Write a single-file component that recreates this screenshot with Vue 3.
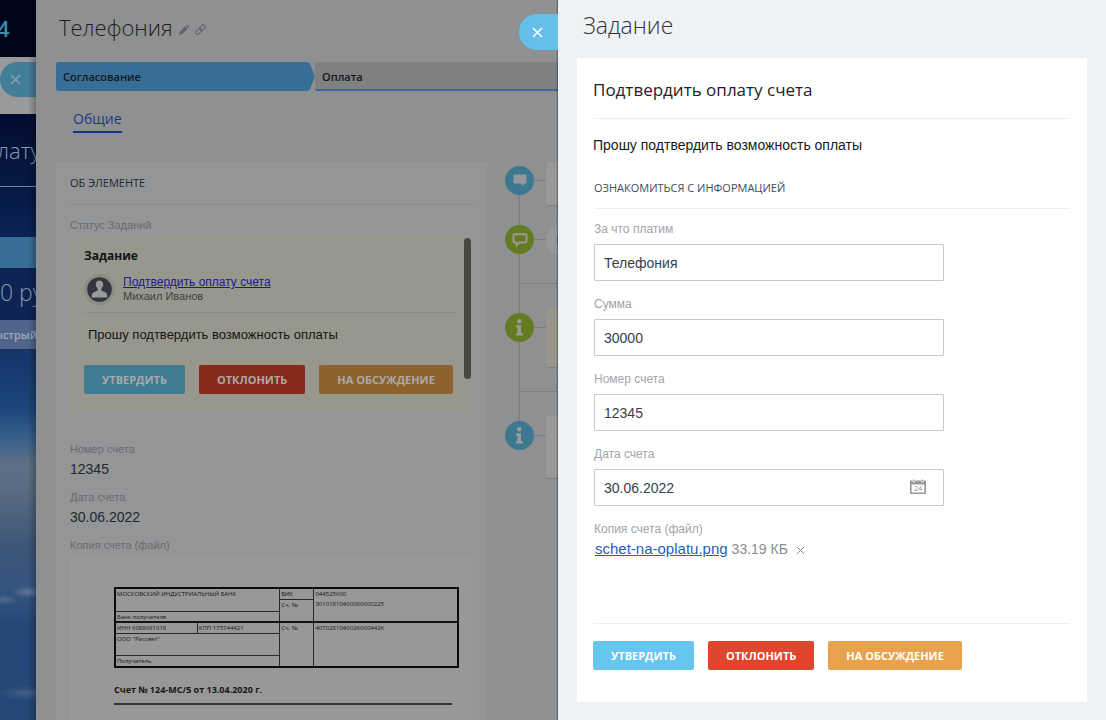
<script setup>
import { ref } from 'vue'

const fields = ref([
  { id: 'subject', label: 'За что платим', value: 'Телефония' },
  { id: 'amount', label: 'Сумма', value: '30000' },
  { id: 'number', label: 'Номер счета', value: '12345' },
  { id: 'date', label: 'Дата счета', value: '30.06.2022', calendar: true },
])

const actions = [
  { text: 'УТВЕРДИТЬ', kind: 'approve' },
  { text: 'ОТКЛОНИТЬ', kind: 'reject' },
  { text: 'НА ОБСУЖДЕНИЕ', kind: 'discuss' },
]
</script>

<template>
  <div class="page">
    <aside class="desk">
      <div class="desk-logo">4</div>
      <div class="desk-bar">
        <button class="desk-close" aria-label="Закрыть">
          <svg width="11" height="11" viewBox="0 0 11 11"><path d="M1 1l9 9M10 1l-9 9" /></svg>
        </button>
      </div>
      <div class="desk-title">лату</div>
      <div class="desk-gap"></div>
      <div class="desk-stage"></div>
      <div class="desk-sum">0 ру</div>
      <div class="desk-quick">ыстрый</div>
      <div class="desk-sky"></div>
    </aside>

    <main class="deal">
      <header class="deal-head">
        <h1>Телефония</h1>
        <svg class="head-icon" width="10" height="10" viewBox="0 0 11 11">
          <path d="M0 11l1-3.500L7 1.500l2.500 2.500-6 6z M7.800 0.900L8.700 0h0.800l1.500 1.500v0.800l-0.900 0.900z" fill="#606266" />
        </svg>
        <svg class="head-icon" width="11" height="11" viewBox="0 0 11 11" fill="none" stroke="#66686c" stroke-width="1.200">
          <rect x="4.200" y="1.700" width="6.400" height="3.800" rx="1.900" transform="rotate(-45 7.400 3.600)" />
          <rect x="0.400" y="5.500" width="6.400" height="3.800" rx="1.900" transform="rotate(-45 3.600 7.400)" />
        </svg>
      </header>

      <div class="stages">
        <div class="stage current">Согласование</div>
        <div class="stage next">Оплата</div>
      </div>

      <nav class="tabs"><a href="#general">Общие</a></nav>

      <div class="deal-body">
        <section class="info">
          <h2>ОБ ЭЛЕМЕНТЕ</h2>
          <div class="label">Статус Заданий</div>
          <div class="note">
            <div class="note-content">
              <h3>Задание</h3>
              <div class="person">
                <svg class="avatar" width="31" height="31" viewBox="0 0 31 31">
                  <circle cx="15.500" cy="15.500" r="15.500" fill="#8b8c85" />
                  <circle cx="15.500" cy="15.500" r="12.300" fill="#31363f" />
                  <path d="M15.500 6.500c-2.500 0-3.800 1.800-3.700 4.100.1 2 .9 3.200 1.900 4.100v1.500c-.7.900-2.900 1.400-4.500 2.200-1.200.6-1.600 2.800-1.600 5.200h15.800c0-2.400-.4-4.600-1.600-5.200-1.600-.8-3.800-1.300-4.500-2.200v-1.500c1-.9 1.800-2.100 1.900-4.100.1-2.300-1.200-4.100-3.700-4.100z" fill="#999a96" />
                </svg>
                <div>
                  <a href="#task">Подтвердить оплату счета</a>
                  <div class="name">Михаил Иванов</div>
                </div>
              </div>
              <p>Прошу подтвердить возможность оплаты</p>
              <div class="buttons">
                <button v-for="a in actions" :key="a.kind" :class="['btn', 'dim', a.kind]">{{ a.text }}</button>
              </div>
            </div>
            <div class="scrollbar"></div>
          </div>

          <dl>
            <dt>Номер счета</dt>
            <dd>12345</dd>
            <dt>Дата счета</dt>
            <dd>30.06.2022</dd>
            <dt>Копия счета (файл)</dt>
          </dl>

          <div class="scan">
            <table>
              <colgroup><col class="c1" /><col class="c2" /><col class="c3" /><col class="c4" /></colgroup>
              <tbody>
                <tr class="h11"><td colspan="2" rowspan="2">МОСКОВСКИЙ ИНДУСТРИАЛЬНЫЙ БАНК</td><td>БИК</td><td class="open">044525600</td></tr>
                <tr class="h12"><td rowspan="2">Сч. №</td><td rowspan="2" class="under">30101810400000000225</td></tr>
                <tr class="h11"><td colspan="2">Банк получателя</td></tr>
                <tr class="h11 thick"><td>ИНН 6088691018</td><td>КПП 175744421</td><td rowspan="3">Сч. №</td><td rowspan="3">40702810400260004426</td></tr>
                <tr class="h22"><td colspan="2">ООО "Рассвет"</td></tr>
                <tr class="h12"><td colspan="2">Получатель</td></tr>
              </tbody>
            </table>
            <div class="scan-title">Счет № 124-МС/5 от 13.04.2020 г.</div>
          </div>
        </section>

        <section class="timeline">
          <div class="entry first">
            <span class="mark blue">
              <svg width="14" height="13" viewBox="0 0 14 13"><path d="M1.500 0.500h11q1 0 1 1v7q0 1-1 1H10.500v3l-3-3h-6q-1 0-1-1v-7q0-1 1-1z" fill="#96989a" /></svg>
            </span>
            <span class="link"></span>
            <span class="card"></span>
          </div>
          <div class="entry second">
            <span class="mark green">
              <svg width="16" height="14" viewBox="0 0 16 14" fill="none" stroke="#989a96" stroke-width="2"><path d="M2.500 1.200h11q1 0 1 1v6.300q0 1-1 1H7.500l-3 3v-3h-2q-1 0-1-1V2.200q0-1 1-1z" /></svg>
            </span>
            <span class="link"></span>
            <span class="face"><i></i></span>
          </div>
          <hr />
          <div class="entry third">
            <span class="mark green">
              <svg width="9" height="17" viewBox="0 0 9 17" fill="#999b99"><circle cx="4.300" cy="2.300" r="2.200" /><path d="M1 6.200h5v8h2v2.300H1v-2.300h1.500V8.400H1z" /></svg>
            </span>
            <span class="link"></span>
            <span class="card cream"></span>
          </div>
          <hr />
          <div class="entry fourth">
            <span class="mark blue">
              <svg width="9" height="17" viewBox="0 0 9 17" fill="#999b99"><circle cx="4.300" cy="2.300" r="2.200" /><path d="M1 6.200h5v8h2v2.300H1v-2.300h1.500V8.400H1z" /></svg>
            </span>
            <span class="link"></span>
            <span class="card"></span>
          </div>
        </section>
      </div>
    </main>

    <section class="task">
      <button class="close" aria-label="Закрыть">
        <svg width="11" height="11" viewBox="0 0 11 11"><path d="M1 1l9 9M10 1l-9 9" /></svg>
      </button>
      <h1>Задание</h1>
      <form class="sheet" @submit.prevent>
        <h2>Подтвердить оплату счета</h2>
        <p>Прошу подтвердить возможность оплаты</p>
        <fieldset>
          <legend>ОЗНАКОМИТЬСЯ С ИНФОРМАЦИЕЙ</legend>
          <div v-for="f in fields" :key="f.id" class="field">
            <label :for="f.id">{{ f.label }}</label>
            <div class="box">
              <input :id="f.id" v-model="f.value" type="text" />
              <button v-if="f.calendar" type="button" class="cal" aria-label="Календарь">
                <svg width="16" height="15" viewBox="0 0 16 15">
                  <path d="M0 2.500q0-1 1-1h1.500v1q1.300 2 2.600 0v-1h5.800v1q1.300 2 2.600 0v-1H15q1 0 1 1V14q0 1-1 1H1q-1 0-1-1zM1.600 5.500v8h12.800v-8z" fill="#969799" fill-rule="evenodd" />
                  <circle cx="3.800" cy="1.400" r="0.900" fill="#969799" /><circle cx="12.200" cy="1.400" r="0.900" fill="#969799" />
                  <text x="8" y="12" text-anchor="middle">24</text>
                </svg>
              </button>
            </div>
          </div>
          <div class="file">
            <div class="file-label">Копия счета (файл)</div>
            <div class="file-row">
              <a href="#file">schet-na-oplatu.png</a>
              <span>33.19 КБ</span>
              <button type="button" aria-label="Удалить файл">
                <svg width="7" height="7" viewBox="0 0 7 7"><path d="M0 0l7 7M7 0l-7 7" /></svg>
              </button>
            </div>
          </div>
        </fieldset>
        <div class="buttons">
          <button v-for="a in actions" :key="a.kind" type="button" :class="['btn', a.kind]">{{ a.text }}</button>
        </div>
      </form>
    </section>
  </div>
</template>

<style>
body { margin: 0; background: #eef2f4; }
</style>

<style scoped>
* { box-sizing: border-box; }
h1, h2, h3, p, dl, dd, fieldset { margin: 0; padding: 0; border: 0; }
button { border: 0; padding: 0; background: none; cursor: pointer; }
svg { display: block; flex: none; }
.page {
  display: flex;
  height: 100vh;
  overflow: hidden;
  font-family: "Liberation Sans", Arial, sans-serif;
  font-size: 13px;
}

.desk {
  position: relative;
  flex: 0 0 36px;
  display: flex;
  flex-direction: column;
  overflow: hidden;
  white-space: nowrap;
  background: #020b2c;
  color: #8f98ac;
  font-family: "Open Sans", sans-serif;
}
.desk::after {
  content: "";
  position: absolute;
  inset: 0 0 0 auto;
  width: 8px;
  background: linear-gradient(90deg, rgba(0, 0, 0, 0), rgba(0, 0, 0, 0.25));
}
.desk-logo { height: 57px; flex: none; padding-top: 12px; background: #010519; color: #408bab; font-size: 22px; font-weight: 600; line-height: 32px; text-indent: -3px; }
.desk-bar { height: 57px; flex: none; padding-top: 5px; background: #999a9b; }
.desk-close { display: flex; align-items: center; width: 40px; height: 35px; padding-left: 10px; border-radius: 18px 0 0 18px; background: #427e98; }
.desk-close path { fill: none; stroke: #80a4b2; stroke-width: 1.500; }
.desk-title { height: 73px; flex: none; padding-top: 19px; border-bottom: 1px solid #75809a; background: linear-gradient(#020c30, #061944); font-size: 22px; line-height: 34px; font-weight: 300; text-indent: -3px; }
.desk-gap { height: 50px; flex: none; background: linear-gradient(#061843, #0b2355); }
.desk-stage { height: 31px; flex: none; background: #386e96; }
.desk-sum { height: 52px; flex: none; padding-top: 7px; background: #0d2455; font-size: 23px; line-height: 34px; font-weight: 300; }
.desk-quick { height: 29px; flex: none; background: #51658c; color: #a1aabc; font-size: 11px; font-weight: 600; line-height: 29px; text-indent: -6px; }
.desk-sky {
  flex: 1;
  background:
    radial-gradient(ellipse 16px 6px at 28px 243px, rgba(130, 143, 161, 0.6), transparent),
    radial-gradient(ellipse 12px 5px at 5px 251px, rgba(120, 135, 155, 0.5), transparent),
    radial-gradient(ellipse 30px 7px at 26px 344px, rgba(110, 130, 155, 0.4), transparent),
    linear-gradient(#15346a, #1b467c 16%, #37608a 24%, #5f7086 31%, #5a6b81 38%, #4a607d 46%, #3c5579 54%, #355580 65%, #254878 74%, #234876 100%);
}

.deal {
  flex: 522 1 522px;
  min-width: 0;
  overflow: hidden;
  padding: 10px 0 0 20px;
  background: #8f9092;
}
.deal-head { display: flex; align-items: center; gap: 4px; height: 34px; padding-left: 3px; }
.deal-head h1, .task h1 { font: 300 23px/34px "Open Sans", sans-serif; color: #1c1e20; }
.deal-head h1 { font-size: 22px; }
.head-icon { margin: 5px 0 0 2px; }
.stages { display: flex; margin-top: 18px; height: 29px; font: 600 11px/29px "Open Sans", sans-serif; color: #14171b; }
.stage { padding-left: 7px; }
.current { flex: 0 0 259px; background: #386e96; border-radius: 3px 0 0 3px; clip-path: polygon(0 0, 97% 0, 98% 4%, 100% 50%, 98% 96%, 97% 100%, 0 100%); }
.next { flex: 1; border-bottom: 2px solid #3d669c; background: #7f8081; border-radius: 3px 0 0 3px; }
.tabs { display: flex; padding: 16px 0 0 17px; }
.tabs a { border-bottom: 2px solid #15338a; color: #19398b; text-decoration: none; font: 500 14px/24px "Open Sans", sans-serif; }
.deal-body { display: flex; align-items: flex-start; margin-top: 29px; }

.info { flex: 431 1 431px; min-width: 0; padding: 0 14px; background: #949597; }
.info h2 { height: 43px; border-bottom: 1px solid #8a8b8d; font: 400 11px/42px "Open Sans", sans-serif; color: #24282f; }
.label, dt { color: #696b6f; font-size: 11px; line-height: 16px; }
.label { margin-top: 12px; }
.note { position: relative; height: 176px; margin-top: 4px; padding: 10px 15px 0 14px; overflow: hidden; background: #98978d; }
.note h3 { font: 700 12px/18px "Open Sans", sans-serif; color: #121313; }
.person { display: flex; gap: 8px; height: 48px; padding-top: 9px; border-bottom: 1px solid #8d8e8b; line-height: 15px; }
.person a { color: #1b1b8c; font-size: 12px; }
.name { font-size: 11px; line-height: 13px; color: #3d4043; }
.note p { padding: 14px 4px 0; line-height: 16px; white-space: nowrap; color: #131415; }
.note .buttons { margin-top: 22px; }
.scrollbar { position: absolute; top: 1px; right: 2px; width: 7px; height: 141px; border-radius: 4px; background: #484843; }
.info dl { margin-top: 28px; }
.info dd { margin: 3px 0 11px; font-size: 14px; line-height: 18px; color: #22262e; }

.scan { min-height: 170px; margin-top: 4px; padding: 30px 14px 0 44px; background: #989898; color: #161616; font-family: "Open Sans", sans-serif; }
.scan table { width: 100%; border-collapse: collapse; table-layout: fixed; border: 2px solid #0c0c0c; font-size: 6px; line-height: 8px; }
.c1, .c2 { width: 24%; }
.c3 { width: 10%; }
.c4 { width: 42%; }
.scan td { padding: 1px 1px 0; border: 1px solid #282828; vertical-align: top; white-space: nowrap; }
.scan td.open { border-bottom: 0; }
.scan td.under { border-top: 0; }
.scan .thick td { border-top: 2px solid #141414; }
.h11 { height: 11px; }
.h12 { height: 12px; }
.h22 { height: 22px; }
.scan-title { margin: 15px 7px 0 0; padding-bottom: 6px; border-bottom: 2px solid #333; font-size: 9px; font-weight: 700; line-height: 14px; }

.timeline { position: relative; flex: 71 1 71px; min-width: 0; padding-left: 18px; }
.timeline::before { content: ""; position: absolute; left: 32px; top: 20px; height: 250px; width: 1px; background: #7a7c7e; }
.entry { position: relative; display: flex; align-items: flex-start; }
.mark { flex: none; display: flex; align-items: center; justify-content: center; width: 29px; height: 29px; margin-top: 4px; border-radius: 50%; }
.blue { background: #3d7892; }
.green { background: #657b22; }
.link { flex: 0 0 12px; height: 1px; margin-top: 18px; background: #7b7d80; }
.card { flex: 1; align-self: stretch; border-radius: 2px 0 0 2px; background: #999; box-shadow: 0 1px 1px #7e7f81; }
.cream { background: #98968a; }
.face { flex: none; display: flex; align-items: center; justify-content: center; width: 33px; height: 33px; border-radius: 50%; background: #979899; }
.face i { width: 11px; height: 14px; border-radius: 50%; background: #5f6368; }
.first { height: 43px; }
.second { height: 33px; margin-top: 18px; }
.second .mark { margin-top: 2px; }
.second .link { margin-top: 16px; }
.third { height: 58px; }
.fourth { height: 62px; }
.fourth .mark { margin-top: 5px; }
.fourth .link { margin-top: 19px; }
.timeline hr { height: 1px; margin: 27px 0 25px 14px; border: 0; background: #7e8082; }
.timeline .third + hr { margin: 24px 0 24px 14px; }

.task { position: relative; flex: 548 1 548px; min-width: 0; padding: 8px 19px 18px; background: #eef2f4; box-shadow: -1px 0 1px rgba(0, 0, 0, 0.3); }
.task h1 { padding-left: 6px; color: #333; }
.close { position: absolute; top: 14px; right: 100%; display: flex; align-items: center; width: 39px; height: 36px; padding-left: 13px; border-radius: 18px 0 0 18px; background: #66beea; }
.close path { fill: none; stroke: #fff; stroke-width: 1.500; }
.sheet { min-height: 644px; margin-top: 16px; padding: 0 17px 32px 16px; background: #fff; }
.sheet h2 { height: 61px; border-bottom: 1px solid #edeef0; font: 400 17px/64px "Open Sans", sans-serif; color: #222; }
.sheet p { padding-top: 18px; font-size: 14px; line-height: 17px; color: #1a1a1a; }
fieldset { min-width: 0; margin: 19px 0 0 1px; }
legend { display: block; width: 100%; height: 36px; margin-bottom: 12px; padding: 0; border-bottom: 1px solid #eceef0; color: #414b5c; font: 400 11px/30px "Open Sans", sans-serif; }
.field { width: 75%; max-width: 350px; margin-bottom: 15px; }
.field label, .file-label { display: block; color: #a0a4ab; font-size: 12px; line-height: 16px; }
.box { position: relative; margin-top: 7px; }
.field input { display: block; width: 100%; height: 37px; padding: 0 9px; border: 1px solid #c6cacf; border-radius: 1px; background: #fff; color: #383e4a; font: 14px "Liberation Sans", Arial, sans-serif; }
.cal { position: absolute; top: 10px; right: 18px; }
.cal text { font: 7px "Open Sans", sans-serif; fill: #8d8e90; }
.file-row { display: flex; align-items: center; gap: 4px; margin-top: 3px; padding-left: 1px; font-size: 14px; line-height: 18px; }
.file-row a { color: #2560bd; font-size: 15px; }
.file-row span { color: #8a8b8e; }
.file-row button { margin: 2px 0 0 5px; }
.file-row path { fill: none; stroke: #808285; stroke-width: 1; }
.sheet .buttons { margin-top: 65px; padding-top: 17px; border-top: 1px solid #edeef0; }

.buttons { display: flex; gap: 14px; }
.btn { height: 29px; padding: 0 18px; border-radius: 2px; color: #fff; font: 700 11px/29px "Open Sans", sans-serif; white-space: nowrap; }
.approve { background: #68c5f0; }
.reject { background: #de462d; }
.discuss { background: #e8a24f; }
.dim { color: #a9aaa8; }
.dim.approve { background: #3f7b93; }
.dim.reject { background: #862a1b; }
.dim.discuss { background: #8d622f; }
</style>
